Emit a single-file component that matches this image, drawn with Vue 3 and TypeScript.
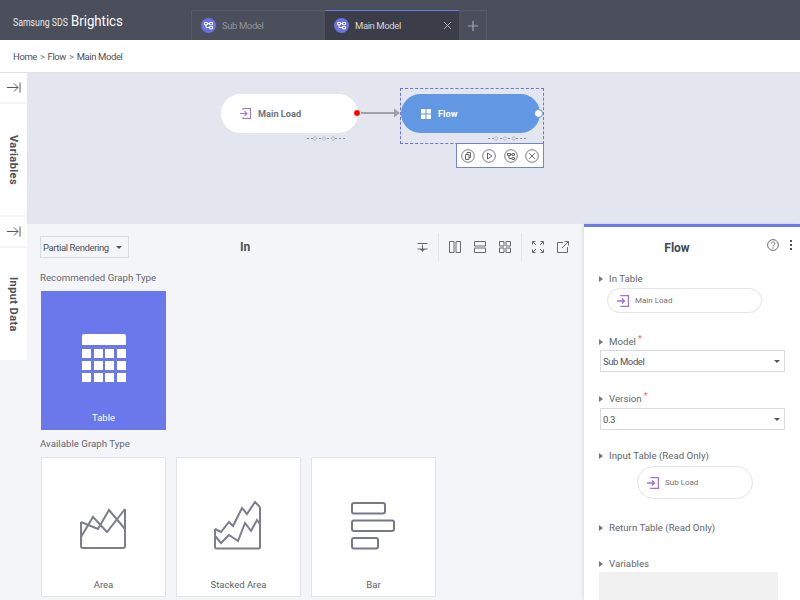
<template>
  <div class="app">
    <header class="top">
      <div class="logo"><span class="logo-sds">Samsung SDS</span><span class="logo-name">Brightics</span></div>
      <div class="tabs">
        <div v-for="t in tabs" :key="t.name" class="tab" :class="{ active: t.active }">
          <svg class="tab-ico" width="15" height="15" viewBox="0 0 15 15">
            <circle cx="7.5" cy="7.5" r="7.5" fill="#6a72e0" />
            <path d="M3.5 4.5h3v2.2h-3zM8.6 4.5h3v2.2h-3zM8.6 8.6h3v2.2h-3zM6.5 5.6h2.1M5 6.7v2.8h3.6" fill="none" stroke="#fff" stroke-width="1" />
          </svg>
          <span class="tab-name">{{ t.name }}</span>
          <svg v-if="t.active" class="tab-x" width="9" height="9" viewBox="0 0 9 9">
            <path d="M1 1l7 7M8 1l-7 7" stroke="#a9acb5" stroke-width="1" />
          </svg>
        </div>
        <div class="tab-add">
          <svg width="10" height="10" viewBox="0 0 10 10"><path d="M5 0v10M0 5h10" stroke="#a4a7b0" stroke-width="1.2" /></svg>
        </div>
      </div>
    </header>

    <nav class="crumbs">
      <span>Home</span><i>&gt;</i><span>Flow</span><i>&gt;</i><span>Main Model</span>
    </nav>

    <div class="body">
      <aside class="rail">
        <template v-for="r in rail" :key="r.label">
          <div class="rail-btn">
            <svg width="14" height="11" viewBox="0 0 14 11">
              <path d="M0 5.5h11M7 1.5l4 4-4 4M13 .5v10" fill="none" stroke="#555a66" stroke-width="1" />
            </svg>
          </div>
          <div class="rail-tab" :style="{ height: r.height + 'px' }"><span>{{ r.label }}</span></div>
        </template>
      </aside>

      <div class="work">
        <section class="canvas">
          <div class="node node-load">
            <svg class="node-ico" width="11" height="11" viewBox="0 0 11 11">
              <path d="M3 .5h7.500v10H3M3 .5v1.500M3 10.500V9M0 5.500h6.500M4.500 3.200l2.300 2.300-2.300 2.300" fill="none" stroke="#9a74dd" stroke-width="1.200" />
            </svg>
            <span>Main Load</span>
          </div>
          <div class="port-red"></div>
          <svg class="link" width="40" height="10" viewBox="0 0 40 10">
            <path d="M0 5h34" stroke="#9fa2a6" stroke-width="2" />
            <path d="M33 .5l6 4.500-6 4.500z" fill="#9fa2a6" />
          </svg>
          <svg class="hint hint-a" width="38" height="5" viewBox="0 0 38 5">
            <path d="M0 2.500h38" stroke="#8b8e96" stroke-dasharray="2 2" />
            <path d="M8 .5l2 2-2 2-2-2zM17 .5l2 2-2 2-2-2zM26 .5l2 2-2 2-2-2z" fill="#e3e6ee" stroke="#9a9da5" stroke-width=".7" />
          </svg>

          <div class="selection"></div>
          <div class="node node-flow">
            <svg class="node-ico" width="10" height="10" viewBox="0 0 10 10">
              <path d="M0 0h4.500v4.500H0zM5.500 0H10v4.500H5.500zM0 5.500h4.500V10H0zM5.500 5.500H10V10H5.500z" fill="#fff" />
            </svg>
            <span>Flow</span>
          </div>
          <div class="port-open"></div>
          <svg class="hint hint-b" width="38" height="5" viewBox="0 0 38 5">
            <path d="M0 2.500h38" stroke="#8b8e96" stroke-dasharray="2 2" />
            <path d="M8 .5l2 2-2 2-2-2zM17 .5l2 2-2 2-2-2zM26 .5l2 2-2 2-2-2z" fill="#e3e6ee" stroke="#9a9da5" stroke-width=".7" />
          </svg>

          <div class="node-tools">
            <svg v-for="(d, i) in toolPaths" :key="i" width="14" height="14" viewBox="0 0 14 14">
              <circle cx="7" cy="7" r="6.300" fill="none" stroke="#77797f" stroke-width="1" />
              <path :d="d" fill="none" stroke="#66686e" stroke-width="1" />
            </svg>
          </div>
        </section>

        <section class="lower">
          <div class="charts">
            <div class="chart-bar">
              <div class="render-select"><span>Partial Rendering</span><b class="caret"></b></div>
              <div class="chart-title">In</div>
              <div class="chart-tools">
                <svg width="11" height="11" viewBox="0 0 11 11"><path d="M.5 1.500h10M.5 7h10M5.500 2.500v5" fill="none" stroke="#666a74" /><path d="M3 7h5l-2.500 3z" fill="#666a74" /></svg>
                <i class="sep"></i>
                <svg width="12" height="12" viewBox="0 0 12 12"><path d="M.5.500h4.500v11H.5zM7 .5h4.500v11H7z" fill="none" stroke="#666a74" /></svg>
                <svg width="12" height="12" viewBox="0 0 12 12"><path d="M.5.500h11V5H.5zM.5 7h11v4.500H.5z" fill="none" stroke="#666a74" /></svg>
                <svg width="12" height="12" viewBox="0 0 12 12"><path d="M.5.500H5V5H.5zM7 .5h4.500V5H7zM.5 7H5v4.500H.5zM7 7h4.500v4.500H7z" fill="none" stroke="#666a74" /></svg>
                <i class="sep"></i>
                <svg width="12" height="12" viewBox="0 0 12 12"><path d="M.5 3.500V.5h3M8.500.5h3v3M11.500 8.500v3h-3M3.500 11.500h-3v-3M1 1l3 3M11 1L8 4M11 11L8 8M1 11l3-3" fill="none" stroke="#666a74" /></svg>
                <svg width="12" height="12" viewBox="0 0 12 12"><path d="M6 1.500H.5v10h10V6M5 7l6.500-6.500M7.500.5h4v4" fill="none" stroke="#666a74" /></svg>
              </div>
            </div>

            <div class="group-label rec">Recommended Graph Type</div>
            <div class="card selected">
              <svg width="44" height="50" viewBox="0 0 44 50">
                <path d="M0 3a2 2 0 0 1 2-2h40a2 2 0 0 1 2 2v9H0z" fill="#fff" />
                <g fill="#fff">
                  <template v-for="y in [16, 28, 40]" :key="y">
                    <rect v-for="x in [0, 12, 23, 35]" :key="x" :x="x" :y="y" width="9" height="9" />
                  </template>
                </g>
              </svg>
              <span>Table</span>
            </div>

            <div class="group-label avail">Available Graph Type</div>
            <div class="card-row">
              <div class="card">
                <svg width="46" height="42" viewBox="0 0 46 42">
                  <path d="M1 14V38a2 2 0 0 0 2 2H43a2 2 0 0 0 2-2V1" fill="none" stroke="#7c7e8a" stroke-width="2" />
                  <path d="M1 14L18 21 29 2 45 21M1 29L13 9 27 24 45 1" fill="none" stroke="#7c7e8a" stroke-width="2" />
                </svg>
                <span>Area</span>
              </div>
              <div class="card">
                <svg width="47" height="49" viewBox="0 0 47 49">
                  <path d="M1 28V46a1.500 1.500 0 0 0 1.500 1.500H44.500a1.500 1.500 0 0 0 1.500-1.500V6" fill="none" stroke="#7c7e8a" stroke-width="2" />
                  <path d="M1 28L7 31 15 21 19 25 28 7 33 13 41 1 46 6M1 35L7 42 15 34 24 40 31 22 37 30 43 19 46 23" fill="none" stroke="#7c7e8a" stroke-width="2" />
                </svg>
                <span>Stacked Area</span>
              </div>
              <div class="card">
                <svg width="44" height="48" viewBox="0 0 44 48">
                  <rect x="1" y="1" width="33" height="10.500" rx="2" fill="none" stroke="#77798a" stroke-width="2" />
                  <rect x="1" y="18.500" width="42" height="10.500" rx="2" fill="none" stroke="#77798a" stroke-width="2" />
                  <rect x="1" y="36" width="26" height="10.500" rx="2" fill="none" stroke="#77798a" stroke-width="2" />
                </svg>
                <span>Bar</span>
              </div>
            </div>
          </div>

          <aside class="props">
            <div class="props-head">
              <h2>Flow</h2>
              <svg class="help" width="12" height="12" viewBox="0 0 12 12">
                <circle cx="6" cy="6" r="5.400" fill="none" stroke="#666a74" />
                <path d="M4.300 4.700c0-2.300 3.500-2.300 3.500-.2 0 1.300-1.800 1.300-1.800 3M6 8.300v1.200" fill="none" stroke="#666a74" />
              </svg>
              <span class="more"><b></b><b></b><b></b></span>
            </div>

            <div class="prop prop-intable">
              <label>In Table</label>
              <div class="pill pill-in">
                <svg width="12" height="12" viewBox="0 0 11 11"><path d="M3 .5h7.500v10H3M0 5.500h6.500M4.500 3.200l2.300 2.300-2.300 2.300" fill="none" stroke="#9a74dd" stroke-width="1.200" /></svg>
                <span>Main Load</span>
              </div>
            </div>
            <div class="prop prop-model">
              <label>Model<em>*</em></label>
              <div class="field"><span>Sub Model</span><b class="caret"></b></div>
            </div>
            <div class="prop prop-version">
              <label>Version<em>*</em></label>
              <div class="field"><span>0.3</span><b class="caret"></b></div>
            </div>
            <div class="prop prop-input">
              <label>Input Table (Read Only)</label>
              <div class="pill pill-sub">
                <svg width="12" height="12" viewBox="0 0 11 11"><path d="M3 .5h7.500v10H3M0 5.500h6.500M4.500 3.200l2.300 2.300-2.300 2.300" fill="none" stroke="#9a74dd" stroke-width="1.200" /></svg>
                <span>Sub Load</span>
              </div>
            </div>
            <div class="prop prop-return">
              <label>Return Table (Read Only)</label>
            </div>
            <div class="prop prop-vars">
              <label>Variables</label>
              <div class="vars-box"></div>
            </div>
          </aside>
        </section>
      </div>
    </div>
  </div>
</template>

<script setup lang="ts">
const tabs = [
  { name: 'Sub Model', active: false },
  { name: 'Main Model', active: true },
];

const rail = [
  { label: 'Variables', height: 111 },
  { label: 'Input Data', height: 112 },
];

const toolPaths = [
  'M4.500 5.500h3.500v5h-3.500zM6 5.500V3.500h3.500v5H8',
  'M5.500 4v6l4.500-3z',
  'M3.500 4.500h3v2h-3zM8 4.500h2.500v2H8zM8 8.500h2.500v2H8zM6.500 5.500H8M5 6.500v3h3',
  'M4 4l6 6M10 4l-6 6',
];
</script>

<style>
html, body { margin: 0; padding: 0; background: #f4f5f8; }
</style>

<style scoped>
.app {
  width: 800px;
  height: 600px;
  overflow: hidden;
  display: flex;
  flex-direction: column;
  font-family: Roboto, "Liberation Sans", Arial, sans-serif;
  font-size: 9.700px;
  color: #5c5f68;
}

.top {
  height: 40px;
  flex: none;
  background: #4a4f5b;
  display: flex;
  box-sizing: border-box;
  padding-left: 13px;
}
.logo { width: 178px; padding-top: 12px; color: #e9eaee; white-space: nowrap; display: flex; align-items: baseline; }
.logo-sds {
  display: inline-block;
  width: 58px;
  font-size: 11.500px;
  transform: scaleX(0.76);
  transform-origin: left;
}
.logo-name {
  display: inline-block;
  width: 52px;
  font-size: 15px;
  color: #fff;
  transform: scaleX(0.88);
  transform-origin: left;
}
.tabs { display: flex; margin-top: 10px; }
.tab {
  width: 134px;
  box-sizing: border-box;
  height: 30px;
  display: flex;
  align-items: center;
  padding-left: 9px;
  border: 1px solid #555a66;
  border-bottom: 0;
  border-right: 0;
  color: #92959e;
  font-size: 9.500px;
  letter-spacing: -0.4px;
}
.tab.active {
  background: #3b3e48;
  border: 0;
  border-top: 1px solid #6b7bea;
  color: #d5d6da;
}
.tab-ico { flex: none; margin-right: 6px; }
.tab-name { flex: 1; }
.tab-x { margin-right: 7px; }
.tab-add {
  width: 28px;
  box-sizing: border-box;
  border: 1px solid #555a66;
  border-bottom: 0;
  border-left: 0;
  display: flex;
  align-items: center;
  justify-content: center;
}

.crumbs {
  height: 33px;
  flex: none;
  box-sizing: border-box;
  background: #fff;
  border-bottom: 1px solid #dfe1e7;
  padding-left: 13px;
  display: flex;
  align-items: center;
  color: #4d5058;
  font-size: 9.500px;
  letter-spacing: -0.4px;
}
.crumbs i { font-style: normal; margin: 0 3px; color: #7d8088; }

.body { flex: 1; display: flex; min-height: 0; }

.rail { width: 27px; flex: none; background: #f4f5f8; }
.rail-btn {
  height: 29px;
  margin-bottom: 2px;
  background: #fff;
  display: flex;
  align-items: center;
  justify-content: center;
}
.rail-tab {
  background: #fff;
  margin-bottom: 2px;
  display: flex;
  align-items: center;
  justify-content: center;
}
.rail-tab span {
  writing-mode: vertical-rl;
  font-weight: 700;
  color: #4d5058;
  font-size: 11px;
  letter-spacing: 0.4px;
}

.work { flex: 1; display: flex; flex-direction: column; min-width: 0; }

.canvas { position: relative; height: 151px; flex: none; background: #e3e6ee; }
.node {
  position: absolute;
  top: 21px;
  height: 39px;
  border-radius: 20px;
  display: flex;
  align-items: center;
  box-sizing: border-box;
  font-weight: 700;
  font-size: 9.200px;
}
.node-load { left: 194px; width: 137px; background: #fff; padding-left: 19px; color: #6b7380; }
.node-flow { left: 374px; width: 139px; background: #6197e3; padding-left: 20px; color: #fff; }
.node-ico { margin-right: 7px; }
.port-red {
  position: absolute;
  left: 326px;
  top: 36px;
  width: 6px;
  height: 6px;
  border-radius: 50%;
  background: #f00;
  border: 1px solid #fff;
}
.port-open {
  position: absolute;
  left: 507px;
  top: 36px;
  width: 7px;
  height: 7px;
  border-radius: 50%;
  background: #fff;
  border: 1px solid #6197e3;
}
.link { position: absolute; left: 334px; top: 35px; }
.selection {
  position: absolute;
  left: 373px;
  top: 15px;
  width: 142px;
  height: 54px;
  border: 1px dashed #6b72dd;
}
.hint { position: absolute; top: 63px; }
.hint-a { left: 280px; }
.hint-b { left: 461px; }
.node-tools {
  position: absolute;
  left: 429px;
  top: 70px;
  box-sizing: border-box;
  width: 88px;
  height: 25px;
  background: #fff;
  border: 1px solid #7681dc;
  display: flex;
  align-items: center;
  justify-content: space-between;
  padding: 0 4px;
}

.lower { flex: 1; display: flex; min-height: 0; background: #f4f5f8; }
.charts { width: 557px; flex: none; box-sizing: border-box; padding: 12px 0 0 13px; }
.chart-bar { display: flex; align-items: center; height: 22px; position: relative; }
.render-select {
  width: 89px;
  height: 22px;
  box-sizing: border-box;
  border: 1px solid #d9dbe1;
  display: flex;
  align-items: center;
  justify-content: space-between;
  padding: 0 6px 0 2px;
  color: #4d5058;
  white-space: nowrap;
  font-size: 9.500px;
  letter-spacing: -0.4px;
}
.caret {
  width: 0;
  height: 0;
  border: 3px solid transparent;
  border-top: 3px solid #555;
  border-bottom: 0;
}
.chart-title {
  position: absolute;
  left: 200px;
  font-size: 12px;
  font-weight: 700;
  color: #4d5058;
}
.chart-tools {
  position: absolute;
  left: 377px;
  top: -3px;
  display: flex;
  align-items: center;
  height: 28px;
  gap: 13px;
}
.chart-tools .sep { width: 1px; height: 28px; background: #e2e4e9; margin: 0 -3px; }

.group-label { color: #63666e; line-height: 12px; }
.rec { margin-top: 14px; margin-bottom: 7px; }
.avail { margin-top: 8px; margin-bottom: 7px; }
.card {
  width: 125px;
  height: 140px;
  box-sizing: border-box;
  background: #fff;
  border: 1px solid #e2e4e9;
  display: flex;
  flex-direction: column;
  align-items: center;
  position: relative;
  justify-content: flex-end;
  padding-bottom: 46px;
  color: #5c5f68;
}
.card span { position: absolute; bottom: 5px; line-height: 12px; font-size: 9.500px; }
.card.selected {
  background: #6a78ec;
  color: #fff;
  border-color: #6a78ec;
  margin-left: 1px;
  height: 139px;
  padding-bottom: 46px;
}
.card-row { display: flex; gap: 10px; margin-left: 1px; }
.card-row .card svg { margin-right: 2px; }

.props {
  flex: 1;
  background: #fff;
  border-top: 3px solid #6b7bea;
  box-shadow: -1px 0 3px rgba(0, 0, 0, 0.1);
  position: relative;
  min-width: 0;
}
.props-head {
  position: relative;
  height: 41px;
  display: flex;
  align-items: center;
  justify-content: center;
}
.props-head h2 { margin: 0; font-size: 12px; font-weight: 700; color: #44474f; padding-right: 30px; }
.help { position: absolute; left: 183px; top: 12px; }
.more {
  position: absolute;
  left: 206px;
  top: 13px;
  display: flex;
  flex-direction: column;
  gap: 2px;
}
.more b { width: 2px; height: 2px; background: #555; }

.prop label {
  display: block;
  position: relative;
  padding-left: 25px;
  color: #63666e;
  line-height: 12px;
}
.prop label::before {
  content: "";
  position: absolute;
  left: 15px;
  top: 3px;
  border: 3px solid transparent;
  border-left: 4px solid #777;
  border-right: 0;
}
.prop em { color: #f06a6a; font-style: normal; margin-left: 2px; vertical-align: 3px; font-size: 9px; line-height: 0; }
.prop-intable { margin-top: 5px; }
.prop-model { margin-top: 23px; }
.prop-version { margin-top: 21px; }
.prop-input { margin-top: 20px; }
.prop-return { margin-top: 23px; }
.prop-vars { margin-top: 24px; }

.pill {
  box-sizing: border-box;
  background: #fff;
  border: 1px solid #e2e4e9;
  display: flex;
  align-items: center;
  font-size: 8px;
  color: #70737c;
}
.pill svg { margin-right: 6px; flex: none; }
.pill-in { width: 155px; height: 25px; border-radius: 13px; margin: 3px 0 0 23px; padding-left: 9px; }
.pill-sub { width: 116px; height: 33px; border-radius: 17px; margin: 4px 0 0 53px; padding-left: 9px; }
.field {
  margin: 2px 0 0 16px;
  width: 185px;
  height: 22px;
  box-sizing: border-box;
  border: 1px solid #d9dbe1;
  display: flex;
  align-items: center;
  justify-content: space-between;
  padding: 0 4px 0 2px;
  color: #4d5058;
  font-size: 9.500px;
  letter-spacing: -0.4px;
}
.prop-version .field { margin-top: 3px; }
.vars-box { margin: 2px 0 0 15px; width: 179px; height: 40px; background: #f1f1f1; }
</style>
